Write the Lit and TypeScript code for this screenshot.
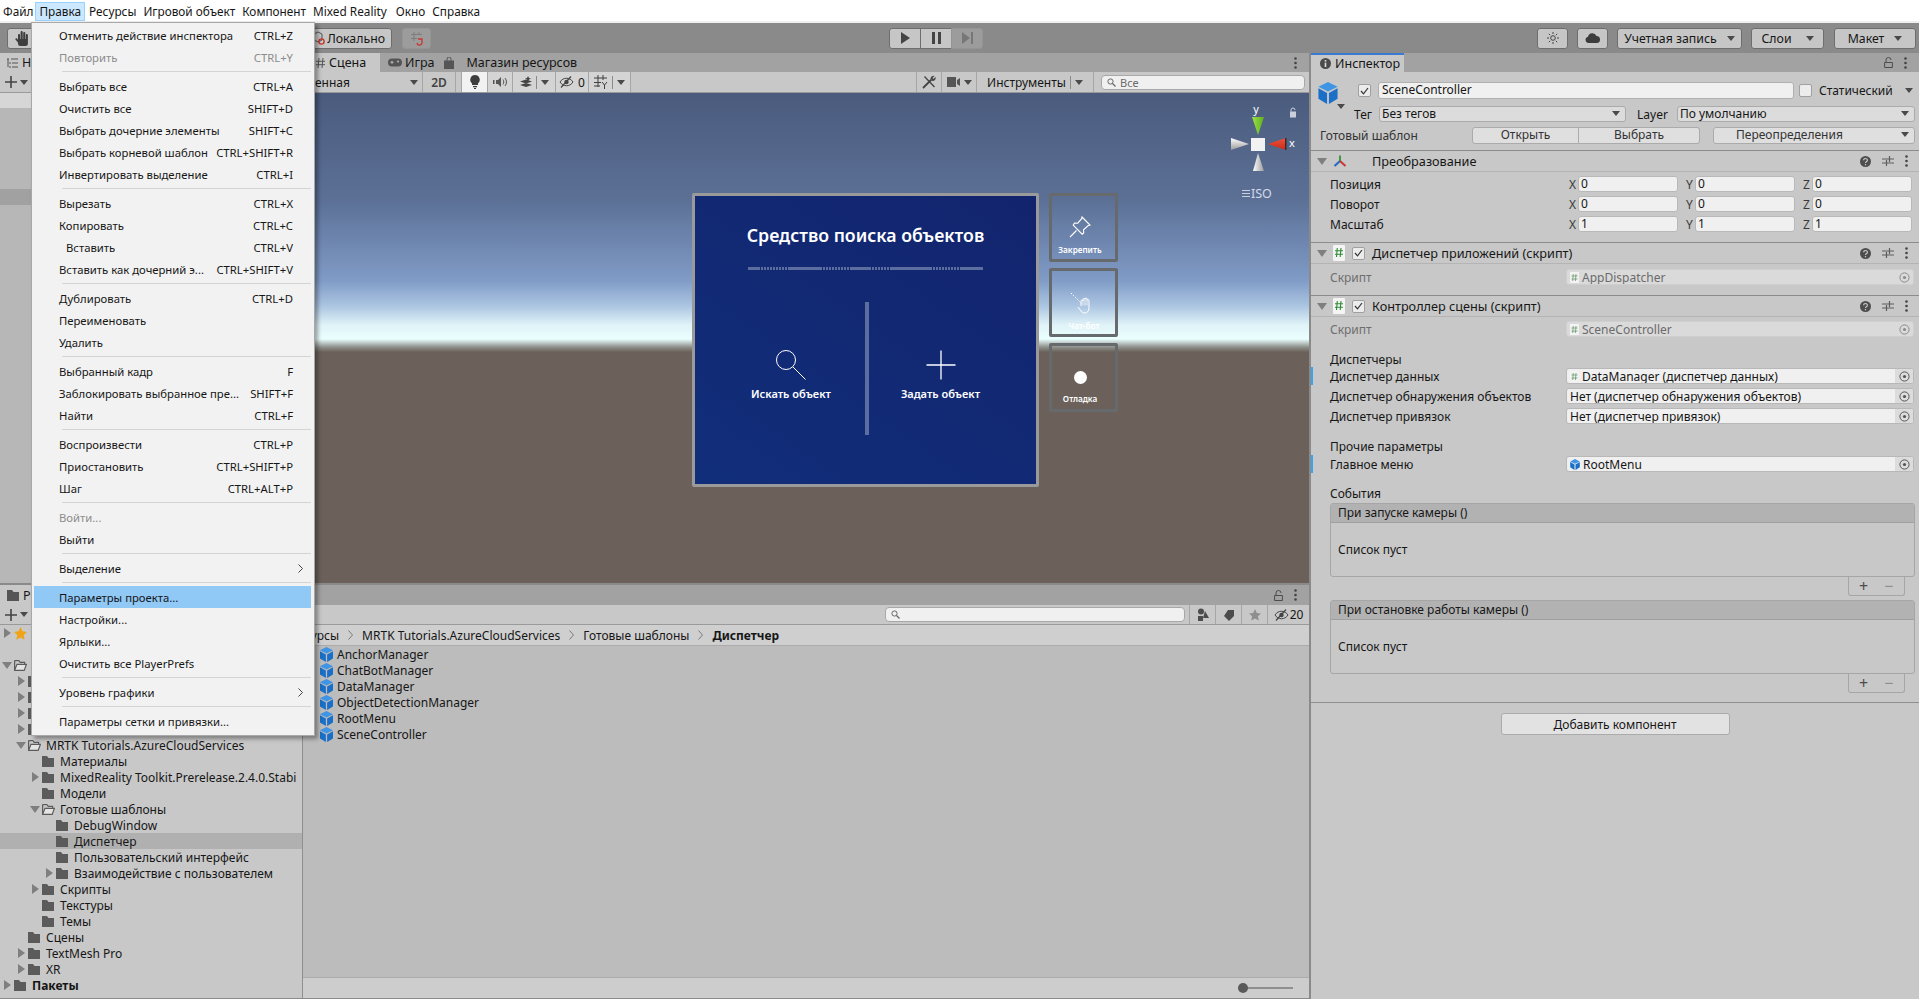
import { LitElement, html, css } from 'lit';
import { customElement } from 'lit/decorators.js';

interface MenuRow {
  t?: string;
  s?: string;
  off?: boolean;
  indent?: boolean;
  sub?: boolean;
  hi?: boolean;
}

const MENU: MenuRow[] = [
  { t: 'Отменить действие инспектора', s: 'CTRL+Z' },
  { t: 'Повторить', s: 'CTRL+Y', off: true },
  {},
  { t: 'Выбрать все', s: 'CTRL+A' },
  { t: 'Очистить все', s: 'SHIFT+D' },
  { t: 'Выбрать дочерние элементы', s: 'SHIFT+C' },
  { t: 'Выбрать корневой шаблон', s: 'CTRL+SHIFT+R' },
  { t: 'Инвертировать выделение', s: 'CTRL+I' },
  {},
  { t: 'Вырезать', s: 'CTRL+X' },
  { t: 'Копировать', s: 'CTRL+C' },
  { t: 'Вставить', s: 'CTRL+V', indent: true },
  { t: 'Вставить как дочерний э...', s: 'CTRL+SHIFT+V' },
  {},
  { t: 'Дублировать', s: 'CTRL+D' },
  { t: 'Переименовать' },
  { t: 'Удалить' },
  {},
  { t: 'Выбранный кадр', s: 'F' },
  { t: 'Заблокировать выбранное пре...', s: 'SHIFT+F' },
  { t: 'Найти', s: 'CTRL+F' },
  {},
  { t: 'Воспроизвести', s: 'CTRL+P' },
  { t: 'Приостановить', s: 'CTRL+SHIFT+P' },
  { t: 'Шаг', s: 'CTRL+ALT+P' },
  {},
  { t: 'Войти...', off: true },
  { t: 'Выйти' },
  {},
  { t: 'Выделение', sub: true },
  {},
  { t: 'Параметры проекта...', hi: true },
  { t: 'Настройки...' },
  { t: 'Ярлыки...' },
  { t: 'Очистить все PlayerPrefs' },
  {},
  { t: 'Уровень графики', sub: true },
  {},
  { t: 'Параметры сетки и привязки...' },
];

const TOP_MENU = ['Файл', 'Правка', 'Ресурсы', 'Игровой объект', 'Компонент', 'Mixed Reality', 'Окно', 'Справка'];

type Arrow = 'r' | 'd' | '';
interface TreeRow {
  lvl: number;
  arrow: Arrow;
  icon: 'folder' | 'open' | 'star' | '';
  t: string;
  bold?: boolean;
  sel?: boolean;
}

const TREE: TreeRow[] = [
  { lvl: 0, arrow: 'r', icon: 'star', t: 'Избранное' },
  { lvl: 0, arrow: '', icon: '', t: '' },
  { lvl: 0, arrow: 'd', icon: 'open', t: 'Ресурсы' },
  { lvl: 1, arrow: 'r', icon: 'folder', t: '' },
  { lvl: 1, arrow: 'r', icon: 'folder', t: '' },
  { lvl: 1, arrow: 'r', icon: 'folder', t: '' },
  { lvl: 1, arrow: 'r', icon: 'folder', t: '' },
  { lvl: 1, arrow: 'd', icon: 'open', t: 'MRTK Tutorials.AzureCloudServices' },
  { lvl: 2, arrow: '', icon: 'folder', t: 'Материалы' },
  { lvl: 2, arrow: 'r', icon: 'folder', t: 'MixedReality Toolkit.Prerelease.2.4.0.Stabi' },
  { lvl: 2, arrow: '', icon: 'folder', t: 'Модели' },
  { lvl: 2, arrow: 'd', icon: 'open', t: 'Готовые шаблоны' },
  { lvl: 3, arrow: '', icon: 'folder', t: 'DebugWindow' },
  { lvl: 3, arrow: '', icon: 'folder', t: 'Диспетчер', sel: true },
  { lvl: 3, arrow: '', icon: 'folder', t: 'Пользовательский интерфейс' },
  { lvl: 3, arrow: 'r', icon: 'folder', t: 'Взаимодействие с пользователем' },
  { lvl: 2, arrow: 'r', icon: 'folder', t: 'Скрипты' },
  { lvl: 2, arrow: '', icon: 'folder', t: 'Текстуры' },
  { lvl: 2, arrow: '', icon: 'folder', t: 'Темы' },
  { lvl: 1, arrow: '', icon: 'folder', t: 'Сцены' },
  { lvl: 1, arrow: 'r', icon: 'folder', t: 'TextMesh Pro' },
  { lvl: 1, arrow: 'r', icon: 'folder', t: 'XR' },
  { lvl: 0, arrow: 'r', icon: 'folder', t: 'Пакеты', bold: true },
];

const ASSETS = ['AnchorManager', 'ChatBotManager', 'DataManager', 'ObjectDetectionManager', 'RootMenu', 'SceneController'];

// solid / dotted runs of the rule under the window title, in px
const RULE: [number, boolean][] = [
  [10, true], [30, false], [32, true], [32, false], [17, true], [23, false], [38, true], [32, false], [21, true],
];

const cube = (w = 13, h = 15) => html`<svg width=${w} height=${h} viewBox="0 0 20 23">
  <polygon points="10,0 20,5 10,10 0,5" fill="#3f94e4"/>
  <polygon points="0,6.5 9,11.5 9,23 0,17.5" fill="#1b6fc6"/>
  <polygon points="11,11.5 20,6.5 20,17.5 11,23" fill="#1b6fc6"/>
</svg>`;

const folder = html`<svg width="12" height="11" viewBox="0 0 12 11"><path d="M0 0h5l1.5 2H12v9H0z" fill="#5b5b5b"/></svg>`;
const folderOpen = html`<svg width="13" height="11" viewBox="0 0 13 11"><path d="M.6.6h4.2L6.2 2.4h4.4V4M.6.6v9.8M.6 10.4h9.6L12.4 4.4H3z" fill="#e4e4e4" stroke="#5b5b5b" stroke-width="1.2"/></svg>`;
const star = html`<svg width="13" height="13" viewBox="0 0 13 13"><path d="M6.5 0l2 4.3 4.5.6-3.3 3.1.9 4.7-4.1-2.3-4.1 2.3.9-4.7L0 4.9l4.5-.6z" fill="#f0a315"/></svg>`;
const triR = html`<svg width="7" height="10" viewBox="0 0 7 10"><path d="M0 0l7 5-7 5z" fill="#7f7f7f"/></svg>`;
const triD = html`<svg width="10" height="7" viewBox="0 0 10 7"><path d="M0 0h10L5 7z" fill="#7f7f7f"/></svg>`;
const caret = html`<svg class="caret" width="8" height="5" viewBox="0 0 8 5"><path d="M0 0h8L4 5z" fill="#4a4a4a"/></svg>`;
const dots = html`<svg width="3" height="12" viewBox="0 0 3 12"><circle cx="1.5" cy="1.5" r="1.3" fill="#444"/><circle cx="1.5" cy="6" r="1.3" fill="#444"/><circle cx="1.5" cy="10.5" r="1.3" fill="#444"/></svg>`;
const lock = html`<svg width="9" height="11" viewBox="0 0 9 11"><path d="M2 5V3a2.5 2.5 0 015 0M.6 5.5h7.8v5H.6z" fill="none" stroke="#4d4d4d"/></svg>`;
const searchSmall = html`<svg width="9" height="9" viewBox="0 0 9 9"><circle cx="3.5" cy="3.5" r="2.6" fill="none" stroke="#666"/><path d="M5.5 5.5L8.5 8.5" stroke="#666" stroke-width="1.2"/></svg>`;
const eyeOff = html`<svg width="15" height="12" viewBox="0 0 15 12"><path d="M1 6c3-5 10-5 13 0-3 5-10 5-13 0z" fill="none" stroke="#444"/><circle cx="7.5" cy="6" r="2.2" fill="#444"/><path d="M2 11.5L12 .5" stroke="#444" stroke-width="1.2"/></svg>`;
const picker = html`<svg width="11" height="11" viewBox="0 0 11 11"><circle cx="5.5" cy="5.5" r="4.6" fill="none" stroke="#555"/><circle cx="5.5" cy="5.5" r="1.6" fill="#555"/></svg>`;
const pickerOff = html`<svg width="11" height="11" viewBox="0 0 11 11"><circle cx="5.5" cy="5.5" r="4.6" fill="none" stroke="#8b8b8b"/><circle cx="5.5" cy="5.5" r="1.6" fill="#8b8b8b"/></svg>`;
const tick = html`<svg width="9" height="8" viewBox="0 0 9 8"><path d="M1 4l2.5 2.8L8 1" fill="none" stroke="#333" stroke-width="1.2"/></svg>`;
const hashBig = html`<svg width="12" height="16" viewBox="0 0 12 16"><rect width="12" height="16" rx="1" fill="#f4f4f4"/><path d="M4.3 3L3.5 12M8 3l-.8 9M2 5.8h8M2 9.3h8" stroke="#2d8a34" stroke-width="1.1" fill="none"/></svg>`;
const hashSmall = html`<svg width="9" height="11" viewBox="0 0 9 11"><rect width="9" height="11" fill="#f3f3f3"/><path d="M3.3 2l-.6 7M6 2l-.6 7M1.5 4h6M1.5 7h6" stroke="#6d9a70" stroke-width=".8" fill="none"/></svg>`;
const helpIcon = html`<svg width="11" height="11" viewBox="0 0 11 11"><circle cx="5.5" cy="5.5" r="5.5" fill="#4e4e4e"/><path d="M3.6 4.2a1.9 1.7 0 113 1.4c-.8.5-1.1.8-1.1 1.5" fill="none" stroke="#c8c8c8" stroke-width="1.2"/><rect x="4.9" y="8" width="1.2" height="1.3" fill="#c8c8c8"/></svg>`;
const slidersIcon = html`<svg width="12" height="12" viewBox="0 0 12 12"><path d="M0 4h12M0 8h12M7.5 1v6M4.5 5v6" stroke="#5d5d5d" stroke-width="1.2"/></svg>`;

@customElement('app-root')
export class AppRoot extends LitElement {
  static styles = css`
    :host {
      display: block;
      position: relative;
      width: 1919px;
      height: 999px;
      overflow: hidden;
      background: #c8c8c8;
      font-family: "Noto Sans", "Open Sans", "Liberation Sans", sans-serif;
      font-size: 12px;
      color: #161616;
      white-space: nowrap;
    }
    svg { display: block; flex: none; }
    .caret { flex: none; }

    /* menu bar */
    .menubar {
      height: 21px;
      background: #fff;
      border-bottom: 2px solid #efefef;
      display: flex;
      align-items: flex-end;
      font-size: 11.8px;
    }
    .menubar span {
      height: 19px;
      line-height: 18px;
      padding: 0 3px;
      margin-right: 1px;
      box-sizing: border-box;
    }
    .menubar span:first-child { padding-right: 1px; }
    .menubar span:nth-child(6) { margin-right: 3px; }
    .menubar span.open {
      background: #cce8ff;
      border: 1px solid #99d1ff;
      line-height: 16px;
      padding: 0 3px;
    }

    /* main toolbar */
    .toolbar {
      height: 30px;
      background: #8a8a8a;
      display: flex;
      align-items: center;
      padding: 0 3px 0 7px;
      box-sizing: border-box;
      font-size: 12.3px;
    }
    .tbtn {
      height: 21px;
      box-sizing: border-box;
      background: #c6c6c6;
      border: 1px solid #6e6e6e;
      border-radius: 3px;
      display: flex;
      align-items: center;
      justify-content: center;
      gap: 10px;
    }
    .tools { width: 293px; justify-content: flex-start; padding-left: 7px; }
    .local { width: 92px; justify-content: flex-end; padding-right: 6px; gap: 2px; }
    .snap { width: 29px; margin-left: 10px; background: #9c9c9c; border-color: #959595; }
    .play { display: flex; margin-left: 458px; }
    .play .tbtn { width: 32px; border-radius: 0; }
    .play .tbtn:first-child { border-radius: 3px 0 0 3px; }
    .play .tbtn + .tbtn { margin-left: -1px; }
    .play .step { width: 32px; background: #9c9c9c; border-color: #959595; border-radius: 0 3px 3px 0; }
    .right { display: flex; margin-left: auto; }
    .sun { width: 31px; }
    .cloud { width: 31px; margin-left: 9px; }
    .account { width: 125px; margin-left: 9px; }
    .layers { width: 73px; margin-left: 9px; gap: 14px; }
    .layout { width: 82px; margin-left: 10px; }

    /* workspace */
    .work { display: flex; height: 946px; }
    .leftcol { width: 1309px; display: flex; flex-direction: column; }
    .vsplit { width: 2px; background: #8a8a8a; }
    .upper { height: 532px; display: flex; }
    .tabbar {
      height: 19px;
      background: #a2a2a2;
      display: flex;
      align-items: stretch;
      position: relative;
      font-size: 12.5px;
    }
    .tab {
      display: flex;
      align-items: center;
      gap: 4px;
      padding: 0 6px;
      overflow: hidden;
    }
    .tab.on { background: #c8c8c8; }
    .tab-tools {
      margin-left: auto;
      display: flex;
      align-items: center;
      gap: 11px;
      padding-right: 12px;
    }

    /* hierarchy */
    .hier { width: 270px; display: flex; flex-direction: column; background: #b7b7b7; border-bottom: 2px solid #8a8a8a; box-sizing: border-box; }
    .hier .tab { width: 31px; box-sizing: border-box; padding: 0 0 0 7px; }
    .hbar {
      height: 21px;
      background: #c8c8c8;
      border-bottom: 1px solid #9a9a9a;
      box-sizing: border-box;
      display: flex;
      align-items: center;
      padding-left: 5px;
      gap: 3px;
    }
    .hfirst { height: 15px; background: #d6d6d6; }
    .hsel { height: 16px; margin-top: 81px; background: #a1a1a1; }

    /* scene */
    .scene-panel { width: 1039px; display: flex; flex-direction: column; }
    .scene-panel .tabbar { padding-left: 38px; }
    .scene-panel .tab.on { width: 72px; box-sizing: border-box; padding-left: 8px; }
    .plain-tab { display: flex; align-items: center; gap: 3px; margin-left: 8px; }
    .plain-tab.store { margin-left: 10px; gap: 12px; }
    .sbar {
      height: 21px;
      background: #c8c8c8;
      border-bottom: 1px solid #9a9a9a;
      box-sizing: border-box;
      display: flex;
      align-items: stretch;
    }
    .cell {
      display: flex;
      align-items: center;
      justify-content: center;
      box-sizing: border-box;
      border-right: 1px solid #a6a6a6;
      gap: 4px;
      background: #d4d4d4;
    }
    .cell i { width: 1px; height: 13px; background: #8a8a8a; }
    .c-shade { width: 153px; padding: 0 4px 0 12px; justify-content: space-between; background: none; }
    .c-2d { width: 33px; background: none; color: #444; font-weight: 600; }
    .c-bulb { width: 27px; margin-left: 5px; background: #f2f2f2; border-left: 1px solid #a6a6a6; }
    .c-audio { width: 25px; }
    .c-fx { width: 43px; }
    .c-hidden { width: 33px; }
    .c-grid { width: 42px; }
    .c-tools { width: 26px; margin-left: auto; border-left: 1px solid #a6a6a6; background: none; }
    .c-cam { width: 35px; background: none; }
    .c-instr { width: 117px; background: none; }
    .search {
      height: 15px;
      background: #f0f0f0;
      border: 1px solid #a8a8a8;
      border-radius: 4px;
      box-sizing: border-box;
      display: flex;
      align-items: center;
      gap: 4px;
      padding-left: 5px;
      align-self: center;
      color: #6b6b6b;
      font-size: 11px;
    }
    .sbar .search { width: 204px; margin: 0 4px 0 7px; }

    .scene {
      flex: 1;
      position: relative;
      overflow: hidden;
      border-bottom: 2px solid #8a8a8a;
      background: linear-gradient(180deg,
        #4a5b7d 0, #5c7096 107px, #7f9bc6 187px, #a9c3e0 212px, #e0f3f8 232px,
        #eaffff 246px, #8f918c 254px, #6b615a 259px, #6b615a 100%);
    }

    .window {
      position: absolute;
      left: 422px;
      top: 100px;
      width: 347px;
      height: 294px;
      box-sizing: border-box;
      border: 3px solid #9a9a9a;
      border-radius: 2px;
      background: linear-gradient(35deg, #112e7a, #13246e);
      color: #fff;
      display: flex;
      flex-direction: column;
      align-items: center;
    }
    .w-title { margin-top: 26px; font-size: 17.7px; line-height: 26px; font-weight: 600; }
    .w-rule { display: flex; height: 3px; margin-top: 19px; }
    .w-rule span { background: #5c6d9f; }
    .w-rule span.dotted { background: repeating-linear-gradient(90deg, #5c6d9f 0 2px, transparent 2px 3px); }
    .w-body { display: flex; margin-top: 32px; height: 133px; width: 100%; }
    .w-col { display: flex; flex-direction: column; align-items: center; padding-top: 48px; font-size: 11px; font-weight: 600; gap: 6px; box-sizing: border-box; }
    .w-col.l { width: 170px; padding-left: 22px; }
    .w-col.r { flex: 1; padding-right: 24px; }
    .w-div { width: 4px; background: #5c6d9f; }

    .float {
      position: absolute;
      left: 779px;
      width: 69px;
      height: 69px;
      box-sizing: border-box;
      border: 3px solid #676a6d;
      border-radius: 2px;
      color: #fff;
      display: flex;
      flex-direction: column;
      align-items: center;
      padding-right: 7px;
      font-size: 8.2px;
      font-weight: 600;
      gap: 6px;
    }
    .f-pin { top: 100px; padding-top: 20px; }
    .f-chat { top: 175px; padding-top: 21px; }
    .f-chat span { margin-left: 8px; }
    .f-debug { top: 250px; padding-top: 25px; gap: 9px; }
    .dot { width: 13px; height: 13px; border-radius: 50%; background: #fff; }
    .gizmo { position: absolute; left: 955px; top: 7px; }

    /* project */
    .project { flex: 1; display: flex; flex-direction: column; min-height: 0; }
    .project .tabbar { height: 20px; }
    .project .tab { width: 31px; box-sizing: border-box; padding: 0 0 0 7px; }
    .pbar {
      height: 20px;
      background: #c8c8c8;
      border-bottom: 1px solid #9a9a9a;
      box-sizing: border-box;
      display: flex;
      align-items: stretch;
    }
    .plus { display: flex; align-items: center; gap: 3px; padding-left: 5px; }
    .pbar .search { width: 300px; height: 15px; margin-left: auto; margin-right: 4px; }
    .pcell { width: 26px; display: flex; align-items: center; justify-content: center; border-left: 1px solid #a6a6a6; box-sizing: border-box; }
    .pcell.wide { width: 42px; gap: 1px; }
    .pbody { flex: 1; display: flex; border-bottom: 1px solid #8a8a8a; min-height: 0; }
    .tree { width: 302px; background: #c8c8c8; border-right: 1px solid #8f8f8f; }
    .row { height: 16px; display: flex; align-items: center; position: relative; }
    .row.sel { background: #b0b0b0; }
    .row.bold { font-weight: 700; }
    .arrow { width: 14px; display: flex; justify-content: center; flex: none; }
    .ficon { width: 14px; display: flex; flex: none; margin-right: 4px; }
    .assets { flex: 1; display: flex; flex-direction: column; min-width: 0; }
    .crumbs {
      height: 21px;
      background: #cfcfcf;
      border-bottom: 1px solid #ababab;
      box-sizing: border-box;
      display: flex;
      align-items: center;
      gap: 9px;
    }
    .crumbs .root { margin-left: -12px; }
    .crumbs b { font-weight: 700; }
    .alist { flex: 1; background: #bcbcbc; padding: 0 0 0 17px; }
    .alist .row { gap: 4px; }
    .pfoot {
      height: 21px;
      background: #cdcdcd;
      border-top: 1px solid #ababab;
      box-sizing: border-box;
      display: flex;
      align-items: center;
      justify-content: flex-end;
      padding-right: 16px;
    }
    .slider { width: 55px; height: 2px; background: #8f8f8f; position: relative; }
    .slider::before {
      content: '';
      position: absolute;
      left: 0;
      top: -4px;
      width: 10px;
      height: 10px;
      border-radius: 50%;
      background: #5a5a5a;
    }

    /* inspector */
    .insp { flex: 1; min-width: 0; background: #c8c8c8; display: flex; flex-direction: column; }
    .insp .tab {
      width: 93px;
      box-sizing: border-box;
      padding-left: 9px;
      border-top: 2px solid #3a7ad0;
      background: #c8c8c8;
    }
    .go-head { height: 78px; box-sizing: border-box; padding: 10px 4px 0 7px; display: flex; flex-direction: column; }
    .go1 { display: flex; align-items: center; height: 17px; }
    .cube-wrap { width: 20px; height: 22px; margin-right: 20px; margin-top: 5px; position: relative; flex: none; }
    .cube-wrap .caret { position: absolute; left: 19px; top: 22px; }
    .check {
      width: 13px;
      height: 13px;
      box-sizing: border-box;
      background: #ececec;
      border: 1px solid #a0a0a0;
      border-radius: 2px;
      display: flex;
      align-items: center;
      justify-content: center;
      flex: none;
    }
    .name {
      width: 416px;
      height: 17px;
      margin: 0 5px 0 7px;
      box-sizing: border-box;
      background: #f0f0f0;
      border: 1px solid #b0b0b0;
      border-radius: 3px;
      padding-left: 3px;
      line-height: 14px;
    }
    .static { margin-left: 7px; flex: 1; }
    .go1 > .caret { margin-right: 2px; }
    .go2 { display: flex; align-items: center; height: 16px; margin-top: 7px; padding-left: 36px; }
    .dd {
      height: 100%;
      box-sizing: border-box;
      background: #dcdcdc;
      border: 1px solid #ababab;
      border-radius: 3px;
      display: flex;
      align-items: center;
      justify-content: space-between;
      padding: 0 5px 1px 2px;
    }
    .dd.tag { width: 248px; margin-left: 7px; }
    .dd.lay { width: 239px; margin-left: 9px; }
    .layer-l { margin-left: 11px; }
    .go3 { display: flex; align-items: center; height: 17px; margin-top: 5px; padding-left: 2px; color: #333; }
    .go3 .lbl { width: 152px; }
    .seg {
      height: 100%;
      box-sizing: border-box;
      background: #dfdfdf;
      border: 1px solid #ababab;
      display: flex;
      align-items: center;
      justify-content: center;
      padding-bottom: 2px;
    }
    .seg.a { width: 107px; border-radius: 3px 0 0 3px; }
    .seg.b { width: 121px; border-left: 0; border-radius: 0 3px 3px 0; }
    .seg.c { width: 202px; margin-left: 13px; border-radius: 3px; justify-content: space-between; padding: 0 5px 2px 22px; }
    .chead {
      height: 22px;
      box-sizing: border-box;
      border-top: 1px solid #8c8c8c;
      border-bottom: 1px solid #b4b4b4;
      display: flex;
      align-items: center;
      padding: 0 11px 0 6px;
      font-size: 12.7px;
    }
    .chead .ci { width: 10px; margin-right: 6px; flex: none; }
    .chead .hi { flex: 1; }
    .chead .hi.far { margin-left: 25px; }
    .chead .chk { margin: 0 7px; }
    .chead .h-icons { display: flex; align-items: center; gap: 11px; }
    .cbody { padding: 4px 5px 10px 19px; display: flex; flex-direction: column; gap: 4px; }
    .cbody.s1 { padding-top: 5px; }
    .cbody.s2 { padding-bottom: 0; }
    .vrow, .orow { display: flex; align-items: center; height: 16px; position: relative; }
    .vrow .lbl { width: 239px; }
    .ax { width: 9px; color: #3a3a3a; flex: none; }
    .num {
      width: 100px;
      height: 16px;
      box-sizing: border-box;
      background: #f0f0f0;
      border: 1px solid #b8b8b8;
      border-radius: 3px;
      padding-left: 2px;
      line-height: 14px;
      margin-right: 8px;
      flex: none;
    }
    .num:last-child { margin-right: 0; }
    .orow .lbl { width: 236px; flex: none; }
    .orow.ro .lbl { color: #6e6e6e; }
    .obj {
      flex: 1;
      height: 16px;
      box-sizing: border-box;
      background: #f0f0f0;
      border: 1px solid #b8b8b8;
      border-radius: 3px;
      display: flex;
      align-items: center;
      padding-left: 3px;
      gap: 3px;
      overflow: hidden;
    }
    .obj .txt { flex: 1; }
    .obj .pick { width: 18px; height: 100%; display: flex; align-items: center; justify-content: center; background: #dcdcdc; }
    .orow.ro .obj { background: #dadada; color: #6b6b6b; border-color: #cfcfcf; }
    .orow.ro .pick { background: none; }
    .mod::before {
      content: '';
      position: absolute;
      left: -19px;
      top: -1px;
      width: 2px;
      height: 18px;
      background: #38a4f0;
    }
    .gaphead { margin-top: 10px; height: 16px; line-height: 16px; }
    .gaphead.first { margin-top: 11px; margin-bottom: -4px; }
    .gaphead.tight { margin-top: 11px; margin-bottom: -3px; }
    .gaphead.ev { margin-top: 10px; margin-bottom: -3px; }
    .evbox {
      height: 74px;
      box-sizing: border-box;
      border: 1px solid #a6a6a6;
      border-radius: 3px;
      margin-right: -1px;
      display: flex;
      flex-direction: column;
    }
    .evbox .eh {
      height: 18px;
      background: #b2b2b2;
      border-bottom: 1px solid #a0a0a0;
      line-height: 17px;
      padding-left: 7px;
      flex: none;
    }
    .evbox .eb { flex: 1; display: flex; align-items: center; padding-left: 7px; }
    .evfoot {
      width: 57px;
      height: 20px;
      box-sizing: border-box;
      margin: -1px 9px 0 auto;
      border: 1px solid #a6a6a6;
      border-top: 0;
      border-radius: 0 0 3px 3px;
      display: flex;
      align-items: center;
      gap: 16px;
      padding-left: 10px;
      color: #4c4c4c;
      font-size: 16px;
      line-height: 16px;
    }
    .evfoot .minus { color: #8f8f8f; }
    .addwrap { border-top: 1px solid #8f8f8f; margin-top: 9px; padding-top: 10px; display: flex; justify-content: center; }
    .add {
      width: 229px;
      height: 22px;
      box-sizing: border-box;
      background: #e2e2e2;
      border: 1px solid #ababab;
      border-radius: 3px;
      display: flex;
      align-items: center;
      justify-content: center;
    }

    /* dropdown over everything */
    .menu {
      position: absolute;
      left: 31px;
      top: 22px;
      width: 284px;
      box-sizing: border-box;
      background: #f2f2f2;
      border: 1px solid #a8a8a8;
      padding: 1px 3px 3px 2px;
      box-shadow: 3px 3px 4px rgba(0, 0, 0, 0.35);
      z-index: 5;
      font-size: 11.3px;
    }
    .mi {
      height: 22px;
      display: flex;
      align-items: center;
      justify-content: space-between;
      padding: 0 18px 0 25px;
      gap: 4px;
    }
    .mi.off { color: #8c8c8c; }
    .mi.hi { background: #90c8f6; }
    .mi.ind .mt { margin-left: 7px; }
    .mi .chev { margin-right: -10px; }
    .msep { height: 1px; margin: 3px 0 3px 28px; background: #d4d4d4; }
  `;

  private renderMenu() {
    return html`<div class="menu">
      ${MENU.map((r) =>
        r.t
          ? html`<div class="mi ${r.off ? 'off' : ''} ${r.hi ? 'hi' : ''} ${r.indent ? 'ind' : ''}">
              <span class="mt">${r.t}</span>
              ${r.s ? html`<span>${r.s}</span>` : ''}
              ${r.sub
                ? html`<svg class="chev" width="5" height="9" viewBox="0 0 5 9"><path d="M.5.5l4 4-4 4" fill="none" stroke="#444"/></svg>`
                : ''}
            </div>`
          : html`<div class="msep"></div>`
      )}
    </div>`;
  }

  private renderToolbar() {
    return html`<div class="toolbar">
      <div class="tbtn tools">
        <svg width="14" height="15" viewBox="0 0 14 15" fill="#3e3e3e">
          <rect x="3" y="3" width="2.1" height="8" rx="1"/><rect x="5.6" y="0" width="2.1" height="9" rx="1"/>
          <rect x="8.2" y="1" width="2.1" height="8" rx="1"/><rect x="10.8" y="3" width="2.1" height="7" rx="1"/>
          <rect x="3" y="8" width="9.9" height="7" rx="2.5"/><path d="M.8 7.5L4 11.5" stroke="#3e3e3e" stroke-width="1.8"/>
        </svg>
      </div>
      <div class="tbtn local">
        <svg width="12" height="14" viewBox="0 0 12 14"><path d="M1 3l4-2 4 2v6l-4 2-4-2z" fill="none" stroke="#555"/><circle cx="8.5" cy="10.5" r="2.6" fill="none" stroke="#c8372d" stroke-width="1.4"/></svg>
        <span>Локально</span>
      </div>
      <div class="tbtn snap">
        <svg width="14" height="15" viewBox="0 0 14 15"><path d="M4 1v9M9 1v3M1 3.5h11M1 7.5h6" stroke="#7d7d7d" fill="none"/><path d="M8 8h4v3a2.5 2.5 0 01-5 1" stroke="#c8372d" fill="none" stroke-width="1.3"/></svg>
      </div>
      <div class="play">
        <div class="tbtn"><svg width="9" height="12" viewBox="0 0 9 12"><path d="M0 0l9 6-9 6z" fill="#444"/></svg></div>
        <div class="tbtn"><svg width="9" height="12" viewBox="0 0 9 12"><path d="M0 0h3v12H0zM6 0h3v12H6z" fill="#444"/></svg></div>
        <div class="tbtn step"><svg width="11" height="12" viewBox="0 0 11 12"><path d="M0 0l8 6-8 6zM9 0h2v12H9z" fill="#777"/></svg></div>
      </div>
      <div class="right">
        <div class="tbtn sun">
          <svg width="12" height="12" viewBox="0 0 12 12"><circle cx="6" cy="6" r="2.3" fill="none" stroke="#444"/><path d="M6 0v2M6 10v2M0 6h2M10 6h2M1.8 1.8l1.4 1.4M8.8 8.8l1.4 1.4M1.8 10.2l1.4-1.4M8.8 3.2l1.4-1.4" stroke="#444"/></svg>
        </div>
        <div class="tbtn cloud">
          <svg width="15" height="10" viewBox="0 0 15 10"><path d="M3.5 10a3.2 3.2 0 01-.5-6.3A4.5 4.5 0 0111.5 3 3.5 3.5 0 0111.5 10z" fill="#3c3c3c"/></svg>
        </div>
        <div class="tbtn account"><span>Учетная запись</span>${caret}</div>
        <div class="tbtn layers"><span>Слои</span>${caret}</div>
        <div class="tbtn layout"><span>Макет</span>${caret}</div>
      </div>
    </div>`;
  }

  private renderGizmo() {
    return html`<svg class="gizmo" width="75" height="105" viewBox="1225 100 75 105">
      <defs>
        <linearGradient id="gGreen" x1="0" y1="0" x2="1" y2="0"><stop offset="0" stop-color="#9be04a"/><stop offset="1" stop-color="#5fae1e"/></linearGradient>
        <linearGradient id="gRed" x1="0" y1="0" x2="0" y2="1"><stop offset="0" stop-color="#f0513a"/><stop offset="1" stop-color="#c92a17"/></linearGradient>
        <linearGradient id="gWh" x1="0" y1="0" x2="0" y2="1"><stop offset="0" stop-color="#fff"/><stop offset="1" stop-color="#9a9a9a"/></linearGradient>
        <linearGradient id="gWv" x1="0" y1="0" x2="1" y2="0"><stop offset="0" stop-color="#fff"/><stop offset="1" stop-color="#9a9a9a"/></linearGradient>
      </defs>
      <text x="1256" y="113" font-size="11" fill="#fff" text-anchor="middle">y</text>
      <polygon points="1252,117 1264,117 1258,135" fill="url(#gGreen)"/>
      <polygon points="1231,138 1249,144 1231,150" fill="url(#gWh)"/>
      <rect x="1251" y="138" width="14" height="13" fill="#f2f2f2"/>
      <polygon points="1286,138 1268,144 1286,150" fill="url(#gRed)"/>
      <rect x="1285" y="138" width="1.5" height="12" fill="#3a2a2a"/>
      <text x="1292" y="147" font-size="11" fill="#fff" text-anchor="middle">x</text>
      <polygon points="1258,153 1253,171 1264,171" fill="url(#gWv)"/>
      <path d="M1290 111.5h6v6h-6z" fill="#c9d0dc"/>
      <path d="M1291 111.5V110a2 2 0 014 0" fill="none" stroke="#c9d0dc"/>
      <path d="M1242 190.5h8M1242 193.5h8M1242 196.5h8" stroke="#d4dae6" stroke-width=".9"/>
      <text x="1251" y="198" font-size="12.5" fill="#d4dae6">ISO</text>
    </svg>`;
  }

  private renderScene() {
    return html`<div class="scene-panel">
      <div class="tabbar">
        <div class="tab on">
          <svg width="9" height="10" viewBox="0 0 9 10"><path d="M3 0L2 10M7 0L6 10M0 3.3h9M0 6.7h9" stroke="#555" fill="none"/></svg>
          <span>Сцена</span>
        </div>
        <div class="plain-tab">
          <svg width="14" height="9" viewBox="0 0 14 9"><rect width="14" height="8" y=".5" rx="4" fill="#555"/><circle cx="10" cy="3.5" r="1" fill="#bbb"/><path d="M2.5 4.3h3M4 2.8v3" stroke="#bbb"/></svg>
          <span>Игра</span>
        </div>
        <div class="plain-tab store">
          <svg width="10" height="12" viewBox="0 0 10 12"><path d="M0 3.5h10V12H0z" fill="#555"/><path d="M3 4V2a2 2 0 014 0v2" fill="none" stroke="#555"/></svg>
          <span>Магазин ресурсов</span>
        </div>
        <div class="tab-tools">${dots}</div>
      </div>
      <div class="sbar">
        <div class="cell c-shade"><span>Затененная</span>${caret}</div>
        <div class="cell c-2d">2D</div>
        <div class="cell c-bulb">
          <svg width="10" height="14" viewBox="0 0 10 14"><path d="M5 0a4.8 4.8 0 013 8.500V10H2V8.500A4.8 4.8 0 015 0zM3 11h4v1.200H3zM4 13h2v1H4z" fill="#3d3d3d"/></svg>
        </div>
        <div class="cell c-audio">
          <svg width="14" height="10" viewBox="0 0 14 10"><path d="M3 3h2l3-3v10L5 7H3zM0 3h1.5v4H0z" fill="#555"/><path d="M10 2.5c1 1.5 1 3.5 0 5M12 1c2 2.5 2 5.5 0 8" fill="none" stroke="#555"/></svg>
        </div>
        <div class="cell c-fx">
          <svg width="12" height="13" viewBox="0 0 12 13"><path d="M6 7L0 9l6 2 6-2zM6 3.5L0 5.5l6 2 6-2z" fill="#444"/><path d="M8 0l1 2 2 .8-2 .8L8 6 7 3.6 5 2.8 7 2z" fill="#444"/></svg>
          <i></i>${caret}
        </div>
        <div class="cell c-hidden">${eyeOff}<span>0</span></div>
        <div class="cell c-grid">
          <svg width="14" height="14" viewBox="0 0 14 14"><path d="M4 0v12M9 0v5M0 3h13M0 7.5h7M0 11h6" stroke="#3f3f3f" fill="none"/><path d="M8 7l2.5 3L13 7M10.5 10v4" stroke="#3f3f3f" fill="none"/></svg>
          <i></i>${caret}
        </div>
        <div class="cell c-tools">
          <svg width="14" height="14" viewBox="0 0 14 14"><path d="M2.5 1.500l10 10.500" stroke="#444" stroke-width="1.300"/><path d="M1 13L9.500 4.500" stroke="#444" stroke-width="1.800"/><path d="M8.500 3.500a3 3 0 014-2.500l-2 2 1 1 2-2a3 3 0 01-3 4z" fill="#444"/></svg>
        </div>
        <div class="cell c-cam">
          <svg width="13" height="10" viewBox="0 0 13 10"><path d="M0 0h9v10H0zM10 3l3-2v8l-3-2z" fill="#555"/></svg>
          ${caret}
        </div>
        <div class="cell c-instr"><span>Инструменты</span><i></i>${caret}</div>
        <div class="search">${searchSmall}<span>Все</span></div>
      </div>
      <div class="scene">
        <div class="window">
          <div class="w-title">Средство поиска объектов</div>
          <div class="w-rule">
            ${RULE.map(([w, solid]) => html`<span class=${solid ? '' : 'dotted'} style="width:${w}px"></span>`)}
          </div>
          <div class="w-body">
            <div class="w-col l">
              <svg width="30" height="30" viewBox="0 0 30 30"><circle cx="10" cy="10" r="9.5" fill="none" stroke="#fff"/><path d="M17 17l12.5 12.5" stroke="#fff"/></svg>
              <span>Искать объект</span>
            </div>
            <div class="w-div"></div>
            <div class="w-col r">
              <svg width="30" height="30" viewBox="0 0 30 30"><path d="M15 .5v29M.5 15h29" stroke="#fff" stroke-width="1.3"/></svg>
              <span>Задать объект</span>
            </div>
          </div>
        </div>
        <div class="float f-pin">
          <svg width="22" height="22" viewBox="0 0 22 22"><path d="M13 1l8 8-2 .8-4.5 4 .2 3.200-1.500 1.200-9-9L5.500 7l3.200.2 4-4.500zM7.500 14.500L1 21" fill="none" stroke="#fff" stroke-width="1.1"/></svg>
          <span>Закрепить</span>
        </div>
        <div class="float f-chat">
          <svg width="28" height="22" viewBox="0 0 28 22" fill="none" stroke="#fff">
            <path d="M5 1l11 11" stroke-dasharray="1.5 1.5"/>
            <path d="M15 14V9a1 1 0 012 0V7.5a1 1 0 012 0V7a1 1 0 012 0v1.5a1 1 0 012 0V16c0 3-2 5-4 5s-3-.5-4-2l-3-4"/>
            <path d="M17 8.5v5M19 7.5v6M21 8.5v5" stroke-width=".8"/>
          </svg>
          <span>Чат-бот</span>
        </div>
        <div class="float f-debug">
          <div class="dot"></div>
          <span>Отладка</span>
        </div>
        ${this.renderGizmo()}
      </div>
    </div>`;
  }

  private renderTree() {
    return html`<div class="tree">
      ${TREE.map(
        (r) => html`<div class="row ${r.sel ? 'sel' : ''} ${r.bold ? 'bold' : ''}" style="padding-left:${r.lvl * 14}px">
          <span class="arrow">${r.arrow === 'r' ? triR : r.arrow === 'd' ? triD : ''}</span>
          <span class="ficon">
            ${r.icon === 'folder' ? folder : r.icon === 'open' ? folderOpen : r.icon === 'star' ? star : ''}
          </span>
          <span>${r.t}</span>
        </div>`
      )}
    </div>`;
  }

  private renderProject() {
    return html`<div class="project">
      <div class="tabbar">
        <div class="tab on">
          <svg width="12" height="11" viewBox="0 0 12 11"><path d="M0 0h5l1.5 2H12v9H0z" fill="#555"/></svg>
          <span>Project</span>
        </div>
        <div class="tab-tools">${lock}${dots}</div>
      </div>
      <div class="pbar">
        <div class="plus">
          <svg width="12" height="12" viewBox="0 0 12 12"><path d="M6 0v12M0 6h12" stroke="#444" stroke-width="1.6"/></svg>
          ${caret}
        </div>
        <div class="search">${searchSmall}</div>
        <div class="pcell">
          <svg width="12" height="13" viewBox="0 0 12 13"><circle cx="4" cy="3.5" r="3" fill="#4c4c4c"/><path d="M8 3l4 7H6z" fill="#4c4c4c"/><rect x="1" y="8" width="5" height="5" fill="#4c4c4c"/></svg>
        </div>
        <div class="pcell">
          <svg width="12" height="12" viewBox="0 0 12 12"><path d="M5 1h6v6l-5 5-5-5z" fill="#4c4c4c"/></svg>
        </div>
        <div class="pcell">
          <svg width="12" height="12" viewBox="0 0 12 12"><path d="M6 0l1.8 4 4.200.5-3.100 2.800.9 4.200L6 9.400 2.200 11.500l.9-4.200L0 4.500 4.200 4z" fill="#8f8f8f"/></svg>
        </div>
        <div class="pcell wide">${eyeOff}<span>20</span></div>
      </div>
      <div class="pbody">
        ${this.renderTree()}
        <div class="assets">
          <div class="crumbs">
            <span class="root">Ресурсы</span>${this.crumbSep()}
            <span>MRTK Tutorials.AzureCloudServices</span>${this.crumbSep()}
            <span>Готовые шаблоны</span>${this.crumbSep()}
            <b>Диспетчер</b>
          </div>
          <div class="alist">
            ${ASSETS.map((a) => html`<div class="row">${cube()}<span>${a}</span></div>`)}
          </div>
          <div class="pfoot"><div class="slider"></div></div>
        </div>
      </div>
    </div>`;
  }

  private crumbSep() {
    return html`<svg width="5" height="10" viewBox="0 0 5 10"><path d="M.5.5l4 4.5-4 4.5" fill="none" stroke="#7a7a7a"/></svg>`;
  }

  private renderVec(label: string, x: string, y: string, z: string) {
    return html`<div class="vrow">
      <span class="lbl">${label}</span>
      <span class="ax">X</span><span class="num">${x}</span>
      <span class="ax">Y</span><span class="num">${y}</span>
      <span class="ax">Z</span><span class="num">${z}</span>
    </div>`;
  }

  private scriptHead(title: string) {
    return html`<div class="chead">
      <span class="ci">${triD}</span>
      ${hashBig}
      <span class="check chk">${tick}</span>
      <span class="hi">${title}</span>
      ${this.headIcons()}
    </div>`;
  }

  private headIcons() {
    return html`<div class="h-icons">${helpIcon}${slidersIcon}${dots}</div>`;
  }

  private renderEvent(title: string) {
    return html`<div>
      <div class="evbox">
        <div class="eh">${title}</div>
        <div class="eb">Список пуст</div>
      </div>
      <div class="evfoot"><span>+</span><span class="minus">−</span></div>
    </div>`;
  }

  private renderInspector() {
    return html`<div class="insp">
      <div class="tabbar">
        <div class="tab on">
          <svg width="11" height="11" viewBox="0 0 11 11"><circle cx="5.5" cy="5.5" r="5.5" fill="#4a4a4a"/><rect x="4.7" y="2" width="1.6" height="1.6" fill="#ddd"/><rect x="4.7" y="4.6" width="1.6" height="4.4" fill="#ddd"/></svg>
          <span>Инспектор</span>
        </div>
        <div class="tab-tools">${lock}${dots}</div>
      </div>
      <div class="go-head">
        <div class="go1">
          <div class="cube-wrap">${cube(20, 22)}${caret}</div>
          <div class="check">${tick}</div>
          <div class="name">SceneController</div>
          <div class="check"></div>
          <span class="static">Статический</span>
          ${caret}
        </div>
        <div class="go2">
          <span>Тег</span>
          <div class="dd tag"><span>Без тегов</span>${caret}</div>
          <span class="layer-l">Layer</span>
          <div class="dd lay"><span>По умолчанию</span>${caret}</div>
        </div>
        <div class="go3">
          <span class="lbl">Готовый шаблон</span>
          <div class="seg a">Открыть</div>
          <div class="seg b">Выбрать</div>
          <div class="seg c"><span>Переопределения</span>${caret}</div>
        </div>
      </div>
      <div class="chead">
        <span class="ci">${triD}</span>
        <svg width="14" height="14" viewBox="0 0 14 14"><path d="M7 7V1.5" stroke="#3f9a3f" stroke-width="2"/><path d="M7 7L1.5 12" stroke="#2566c8" stroke-width="2"/><path d="M7 7l5.500 5" stroke="#c8372d" stroke-width="2"/></svg>
        <span class="hi far">Преобразование</span>
        ${this.headIcons()}
      </div>
      <div class="cbody">
        ${this.renderVec('Позиция', '0', '0', '0')}
        ${this.renderVec('Поворот', '0', '0', '0')}
        ${this.renderVec('Масштаб', '1', '1', '1')}
      </div>
      ${this.scriptHead('Диспетчер приложений (скрипт)')}
      <div class="cbody s1">
        <div class="orow ro">
          <span class="lbl">Скрипт</span>
          <div class="obj">${hashSmall}<span class="txt">AppDispatcher</span><span class="pick">${pickerOff}</span></div>
        </div>
      </div>
      ${this.scriptHead('Контроллер сцены (скрипт)')}
      <div class="cbody s2">
        <div class="orow ro">
          <span class="lbl">Скрипт</span>
          <div class="obj">${hashSmall}<span class="txt">SceneController</span><span class="pick">${pickerOff}</span></div>
        </div>
        <div class="gaphead first">Диспетчеры</div>
        <div class="orow mod">
          <span class="lbl">Диспетчер данных</span>
          <div class="obj">${hashSmall}<span class="txt">DataManager (диспетчер данных)</span><span class="pick">${picker}</span></div>
        </div>
        <div class="orow">
          <span class="lbl">Диспетчер обнаружения объектов</span>
          <div class="obj"><span class="txt">Нет (диспетчер обнаружения объектов)</span><span class="pick">${picker}</span></div>
        </div>
        <div class="orow">
          <span class="lbl">Диспетчер привязок</span>
          <div class="obj"><span class="txt">Нет (диспетчер привязок)</span><span class="pick">${picker}</span></div>
        </div>
        <div class="gaphead tight">Прочие параметры</div>
        <div class="orow mod">
          <span class="lbl">Главное меню</span>
          <div class="obj">${cube(10, 11)}<span class="txt">RootMenu</span><span class="pick">${picker}</span></div>
        </div>
        <div class="gaphead ev">События</div>
        ${this.renderEvent('При запуске камеры ()')}
        ${this.renderEvent('При остановке работы камеры ()')}
      </div>
      <div class="addwrap"><div class="add">Добавить компонент</div></div>
    </div>`;
  }

  render() {
    return html`
      <div class="menubar">
        ${TOP_MENU.map((m) => html`<span class=${m === 'Правка' ? 'open' : ''}>${m}</span>`)}
      </div>
      ${this.renderToolbar()}
      <div class="work">
        <div class="leftcol">
          <div class="upper">
            <div class="hier">
              <div class="tabbar">
                <div class="tab on">
                  <svg width="11" height="10" viewBox="0 0 11 10"><path d="M0 1h2M4 1h7M2 5h2M5 5h6M2 9h2M5 9h6M1 1v8" stroke="#555" fill="none"/></svg>
                  <span>Hierarchy</span>
                </div>
              </div>
              <div class="hbar">
                <svg width="12" height="12" viewBox="0 0 12 12"><path d="M6 0v12M0 6h12" stroke="#444" stroke-width="1.6"/></svg>
                ${caret}
              </div>
              <div class="hfirst"></div>
              <div class="hsel"></div>
            </div>
            ${this.renderScene()}
          </div>
          ${this.renderProject()}
        </div>
        <div class="vsplit"></div>
        ${this.renderInspector()}
      </div>
      ${this.renderMenu()}
    `;
  }
}

declare global {
  interface HTMLElementTagNameMap {
    'app-root': AppRoot;
  }
}
